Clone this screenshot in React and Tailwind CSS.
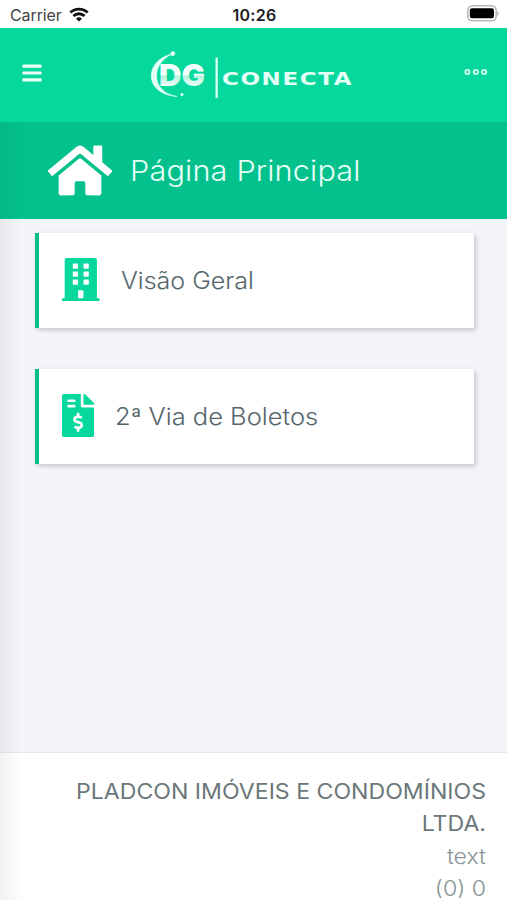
import React from 'react';
import { FaBars, FaBuilding, FaFileInvoiceDollar, FaHome } from 'react-icons/fa';

const cards = [
    {
        id: 'overview',
        label: 'Visão Geral',
        icon: FaBuilding,
        iconClass: 'w-[37.6px] h-[43px]',
        labelClass: 'ml-[21px] scale-x-[1.065]',
    },
    {
        id: 'invoices',
        label: '2ª Via de Boletos',
        icon: FaFileInvoiceDollar,
        iconClass: 'w-[32.25px] h-[43px]',
        labelClass: 'ml-[21px] scale-x-[1.085]',
    },
];

function StatusBar() {
    return (
        <div className="grid grid-cols-3 items-center h-7 pt-0.5 pl-2.5 pr-2 bg-white text-[#1c1c1c]">
            <div className="flex items-center gap-[7px]">
                <span className="text-[16px] leading-5 text-[#444] tracking-[-0.1px]">Carrier</span>
                <svg className="w-5 h-[15px] -mt-0.5" viewBox="0 0 20 15">
                    <g fill="none" stroke="#111" strokeWidth="2.8">
                        <path d="M1.3 5.6a12.4 12.4 0 0 1 17.4 0" />
                        <path d="M4.5 9a7.8 7.8 0 0 1 11 0" />
                    </g>
                    <path d="M10 14.6 7 11.7a4.3 4.3 0 0 1 6 0z" fill="#111" />
                </svg>
            </div>
            <div className="text-center text-[16px] leading-5 font-semibold tracking-[0.3px]">10:26</div>
            <div className="flex justify-end -mt-[3px]">
                <svg className="w-[33px] h-[17px]" viewBox="0 0 33 17">
                    <rect x="1.8" y="0.8" width="28.4" height="15" rx="4.5" fill="#fff" stroke="#b9b9b9" strokeWidth="1.6" />
                    <rect x="3.8" y="3.2" width="24.2" height="10" rx="2.2" fill="#000" />
                    <path d="M31.4 6v5q1.4-.6 1.4-2.5T31.4 6z" fill="#b0b0b0" />
                </svg>
            </div>
        </div>
    );
}

function Logo() {
    return (
        <svg className="w-[204px] h-[50px] mr-[6px]" viewBox="0 0 204 50">
            <defs>
                <linearGradient id="shine" x1="0" y1="0" x2="0" y2="1">
                    <stop offset="0.5" stopColor="#f4fffb" />
                    <stop offset="0.54" stopColor="#b4f2dd" />
                    <stop offset="0.82" stopColor="#f4fffb" />
                </linearGradient>
            </defs>
            {/* Orbit */}
            <path d="M22.5 4C-5.5 9.500-7.500 44 27 46.500C0 42 1 13 22.500 4z" fill="#e4fff6" stroke="#e4fff6" strokeWidth="0.6" />
            <circle cx="22.8" cy="3.6" r="2.3" fill="#e4fff6" />
            <circle cx="32" cy="44.6" r="1.5" fill="#e4fff6" />
            <text x="9" y="35.8" textLength="46" lengthAdjust="spacingAndGlyphs" fill="url(#shine)" className="font-['Inter'] font-black text-[30px]">DG</text>
            <rect x="65.5" y="7.5" width="2.3" height="40.5" fill="#dcfff3" />
            <text x="72" y="34.5" textLength="131" lengthAdjust="spacingAndGlyphs" fill="#e4fff6" className="font-['DejaVu_Sans'] font-bold text-[17px] tracking-[1.2px]">CONECTA</text>
        </svg>
    );
}

function Header() {
    return (
        <header className="flex items-center justify-between h-[94px] pl-[22px] pr-[19px] bg-[#06d79c]">
            <div className="w-16 pb-1">
                <FaBars className="w-5 h-[22px] text-[#eafff8]" />
            </div>
            <Logo />
            <div className="flex justify-end w-16 pb-1.5">
                <svg className="w-6 h-2" viewBox="0 0 24 8" fill="none" stroke="#d4fff0" strokeWidth="1.8">
                    <circle cx="3.4" cy="4" r="2.1" />
                    <circle cx="11.8" cy="4" r="2.1" />
                    <circle cx="20.2" cy="4" r="2.1" />
                </svg>
            </div>
        </header>
    );
}

export default function App() {
    return (
        <div className="relative flex flex-col h-[900px] w-full overflow-hidden bg-[#f3f5f9] font-['Inter',sans-serif]">
            <StatusBar />
            <Header />

            <div className="flex items-center h-[97px] pl-12 bg-[#03c18c] text-white">
                <FaHome className="w-16 h-[57px] -mt-px" />
                <h1 className="ml-[18px] origin-left scale-x-[1.095] text-[28px] font-light tracking-[0.15px] text-[#e8fff8] whitespace-nowrap">
                    Página Principal
                </h1>
            </div>

            <main className="flex flex-col flex-1 gap-[41px] pt-3.5 pl-[35px] pr-[33px]">
                {cards.map((card) => (
                    <div
                        key={card.id}
                        className="flex items-center h-[95px] pl-[23px] bg-white border-l-4 border-[#09bd87] shadow-[2px_2px_5px_rgba(0,0,0,0.2)]"
                    >
                        <card.icon className={`-mt-0.5 text-[#06d79c] ${card.iconClass}`} />
                        <span className={`origin-left text-[23.5px] font-light text-[#54666b] whitespace-nowrap ${card.labelClass}`}>
                            {card.label}
                        </span>
                    </div>
                ))}
            </main>

            <footer className="h-[148px] pt-[23px] pr-[21px] bg-white border-t border-[#e9eaee] text-right text-[21px] leading-[32.4px] text-[#6b7779]">
                <div className="origin-right scale-x-[1.1] whitespace-nowrap">
                    <p>
                        PLADCON IMÓVEIS E CONDOMÍNIOS
                        <br />
                        LTDA.
                    </p>
                    <p className="font-light text-[#8b9496]">text</p>
                    <p className="font-light text-[#8b9496]">(0) 0</p>
                </div>
            </footer>

            {/* Shadow of the closed side menu */}
            <div className="absolute left-0 top-[122px] bottom-0 w-6 bg-gradient-to-r from-black/5 to-transparent pointer-events-none" />
        </div>
    );
}
